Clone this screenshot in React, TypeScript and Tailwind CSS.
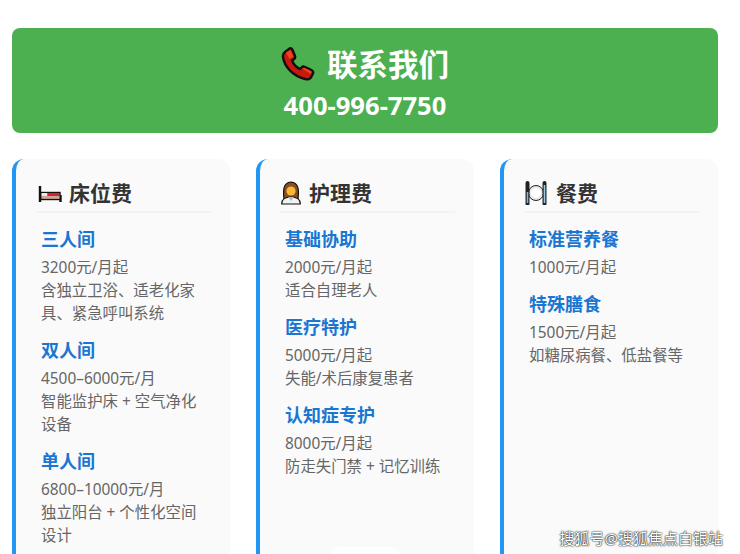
const cards = [
  {
    title: "床位费",
    icon: "bed",
    items: [
      { name: "三人间", lines: ["3200元/月起", "含独立卫浴、适老化家具、紧急呼叫系统"] },
      { name: "双人间", lines: ["4500–6000元/月", "智能监护床 + 空气净化设备"] },
      { name: "单人间", lines: ["6800–10000元/月", "独立阳台 + 个性化空间设计"] },
    ],
  },
  {
    title: "护理费",
    icon: "nurse",
    items: [
      { name: "基础协助", lines: ["2000元/月起", "适合自理老人"] },
      { name: "医疗特护", lines: ["5000元/月起", "失能/术后康复患者"] },
      { name: "认知症专护", lines: ["8000元/月起", "防走失门禁 + 记忆训练"] },
    ],
  },
  {
    title: "餐费",
    icon: "plate",
    items: [
      { name: "标准营养餐", lines: ["1000元/月起"] },
      { name: "特殊膳食", lines: ["1500元/月起", "如糖尿病餐、低盐餐等"] },
    ],
  },
]

function PhoneIcon() {
  return (
    <svg width="34" height="34" viewBox="0 0 34 34" className="shrink-0">
      <path d="M4 5 L8.5 1.5 C10 1 11 1.5 11.5 3 L14 9 C14.5 10.5 14 11.5 12.8 12.2 L11 13.5 C12.5 17 15.5 20.5 19 22 L20.5 20.5 C21.5 19.5 22.5 19.3 23.5 19.8 L30.5 23 C32 23.7 32.5 25 32 26.5 L30.5 29.5 C29.5 32 26.5 33 24 32 C12 29 3.5 20 2 10 C1.7 8 2.5 6.2 4 5 Z" fill="#c8190c" stroke="#111" strokeWidth="2.4" />
      <path d="M5 5.5 L9.5 3 L12.5 9.5 L8.5 12 Z" fill="#f0431a" />
      <path d="M21 21.5 L23.5 20.8 L30.5 24.2 L29.8 27 Z" fill="#f0431a" />
    </svg>
  )
}

function BedIcon() {
  return (
    <svg width="24" height="24" viewBox="0 0 24 24" className="shrink-0">
      <path d="M2 5 V21 M22.5 14 V21" stroke="#111" strokeWidth="2.4" fill="none" />
      <rect x="3" y="11.5" width="19" height="7" fill="#8a5a44" stroke="#111" strokeWidth="1.4" />
      <rect x="3.5" y="12" width="6" height="3" fill="#f3e6e0" />
      <rect x="9.5" y="12" width="12" height="3" fill="#d8232f" />
      <rect x="3.5" y="15" width="18" height="2.8" fill="#c9a596" />
    </svg>
  )
}

function NurseIcon() {
  return (
    <svg width="20" height="24" viewBox="0 0 20 24" className="shrink-0">
      <path d="M3 18 C2 10 2 1.5 10 1 C18 1.5 18 10 17 18 Z" fill="#8a4f1c" stroke="#111" strokeWidth="1.2" />
      <path d="M0.7 23 C0.7 18 4 16 10 16 C16 16 19.3 18 19.3 23 Z" fill="#f2f2f2" stroke="#111" strokeWidth="1.2" />
      <circle cx="10" cy="10" r="4.6" fill="#f6b73c" />
      <path d="M7 16 L10 20 L13 16 Z" fill="#90c4e8" />
    </svg>
  )
}

function PlateIcon() {
  return (
    <svg width="24" height="24" viewBox="0 0 24 24" className="shrink-0">
      <circle cx="12" cy="12" r="7.5" fill="#e8e8e8" stroke="#222" strokeWidth="1" />
      <circle cx="12" cy="12" r="5" fill="#fff" />
      <path d="M3.5 2 V22.5" stroke="#222" strokeWidth="4" strokeLinecap="round" />
      <path d="M3.5 11 V22" stroke="#7fb4d4" strokeWidth="1.6" />
      <path d="M20.5 2 V22.5" stroke="#222" strokeWidth="4" strokeLinecap="round" />
      <path d="M20.5 4 V22" stroke="#9ccbe4" strokeWidth="1.6" />
    </svg>
  )
}

function CardIcon({ name }: { name: string }) {
  if (name === "bed") return <BedIcon />
  if (name === "nurse") return <NurseIcon />
  return <PlateIcon />
}

export default function App() {
  return (
    <div className="relative h-[554px] w-[740px] overflow-hidden bg-white px-3 pt-7 font-['Noto_Sans','Noto_Sans_CJK_SC',sans-serif]">
      <div className="w-[706px]">
        <div className="h-[105px] rounded-lg bg-[#4CAF50] pt-[13px] text-center text-white">
          <div className="flex h-[46px] items-center justify-center gap-[12px]">
            <PhoneIcon />
            <span className="text-[30.5px] leading-[46px] font-bold">联系我们</span>
          </div>
          <div className="mt-[1px] text-[25.6px] leading-[36px] font-bold">400-996-7750</div>
        </div>

        <div className="mt-[26px] grid grid-cols-3 gap-[26px]">
          {cards.map((card) => (
            <div key={card.title} className="h-[420px] rounded-xl border-l-4 border-[#2196F3] bg-[#fafafa] pt-[17px] pr-[19px] pl-5">
              <div className={`flex h-[37px] items-center border-b-2 border-[#f3f3f3] pb-[1px] ${card.icon === "bed" ? "gap-[7px] pl-[2px]" : card.icon === "nurse" ? "gap-2 pl-[1px]" : "gap-2"}`}>
                <CardIcon name={card.icon} />
                <h3 className="text-[21px] leading-[30px] font-bold text-[#333]">{card.title}</h3>
              </div>
              <div className="pt-[13px] pl-[5px]">
                {card.items.map((item) => (
                  <div key={item.name} className="mb-[12px]">
                    <div className="text-[18px] leading-[27px] font-bold text-[#1976D2]">{item.name}</div>
                    <div className="mt-[3px] text-[15.4px] leading-[23px] text-[#666]">
                      {item.lines.map((line) => (
                        <p key={line}>{line}</p>
                      ))}
                    </div>
                  </div>
                ))}
              </div>
            </div>
          ))}
        </div>
      </div>

      <div className="absolute top-[547px] left-[329px] h-3 w-[72px] rounded-t-xl bg-white" />
      <div className="absolute top-[527px] right-[17px] text-[15px] leading-[22px] text-white [text-shadow:0_0_1px_#000,0_0_2px_#000]">
        搜狐号@搜狐焦点白银站
      </div>
    </div>
  )
}
